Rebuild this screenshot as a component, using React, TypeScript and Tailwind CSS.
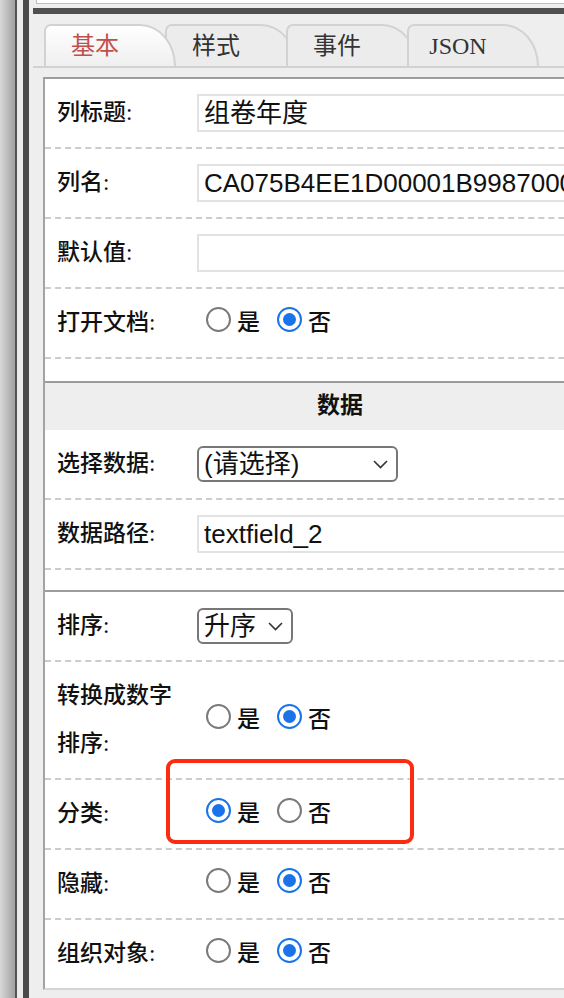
import React from "react";

const SERIF = "font-['Liberation_Serif','Noto_Sans_CJK_SC',serif]";
const SANS = "font-['Liberation_Sans','Noto_Sans_CJK_SC',sans-serif]";

const Radio = ({ checked }: { checked?: boolean }) =>
  checked ? (
    <span className="flex h-[25px] w-[25px] shrink-0 items-center justify-center rounded-full border-[2.5px] border-[#1a73e8] bg-white">
      <span className="block h-[13px] w-[13px] rounded-full bg-[#1a73e8]" />
    </span>
  ) : (
    <span className="block h-[25px] w-[25px] shrink-0 rounded-full border-2 border-[#7a7a7a] bg-white" />
  );

const YesNo = ({ yes }: { yes?: boolean }) => (
  <div className={`flex items-center text-[23px] font-medium ${SERIF}`}>
    <span className="mb-[8px] ml-[9px] block">
      <Radio checked={yes} />
    </span>
    <span className="ml-[6px]">是</span>
    <span className="mb-[8px] ml-[17px] block">
      <Radio checked={!yes} />
    </span>
    <span className="ml-[6px]">否</span>
  </div>
);

const Chevron = () => (
  <svg width="15" height="9" viewBox="0 0 15 9" fill="none">
    <path d="M1 1l6.5 6.5L14 1" stroke="#333" strokeWidth="1.6" />
  </svg>
);

const TextBox = ({ value }: { value?: string }) => (
  <div
    className={`h-[38px] w-full overflow-hidden whitespace-nowrap border-2 border-[#e2e2e2] pl-[5px] text-[26px] leading-[34px] ${SANS}`}
  >
    {value}
  </div>
);

const Select = ({ value, width }: { value: string; width: string }) => (
  <div
    className={`flex h-[36px] items-center justify-between rounded-[6px] border-2 border-[#777] bg-white pl-[5px] pr-[8px] text-[26px] ${SANS} ${width}`}
  >
    <span className="leading-[32px]">{value}</span>
    <Chevron />
  </div>
);

interface RowProps {
  label: string;
  last?: boolean;
  children?: React.ReactNode;
}

const Row = ({ label, last, children }: RowProps) => (
  <div
    className={`flex items-center py-[10px] ${
      last ? "" : "border-b-2 border-dashed border-[#cccccc]"
    }`}
  >
    <div
      className={`w-[152px] shrink-0 pl-[12px] pr-[18px] text-[23px] font-medium leading-[48px] ${SERIF}`}
    >
      {label}
    </div>
    <div className="flex min-w-0 flex-1 items-center pr-[10px]">{children}</div>
  </div>
);

const Tab = ({ label, active, first }: { label: string; active?: boolean; first?: boolean }) => (
  <div
    className={`h-[42px] w-[132px] shrink-0 rounded-tl-[7px] rounded-tr-[36px_42px] border-2 border-b-0 border-[#d2d2d2] ${
      active ? "relative z-10 bg-linear-to-b from-white to-[#efefef]" : "bg-[#ececec]"
    } ${first ? "" : "-ml-[11px]"}`}
  >
    <div
      className={`w-[98px] text-center text-[24px] leading-[40px] ${SERIF} ${
        active ? "text-[#c0504d]" : "text-[#333]"
      }`}
    >
      {label}
    </div>
  </div>
);

export default function App() {
  return (
    <div className="relative flex h-[998px] w-[564px] overflow-hidden bg-[#eeeeee] text-[#111]">
      {/* left frame strips */}
      <div className="w-[15px] shrink-0 bg-linear-to-r from-[#d8d8d8] to-[#a2a2a2]" />
      <div className="w-[2px] shrink-0 bg-[#555]" />
      <div className="w-[6px] shrink-0 bg-[#ececec]" />
      <div className="w-[6px] shrink-0 bg-[#4a4a4a]" />

      <div className="min-w-0 flex-1">
        <div className="ml-[7px] h-[4px] border-b border-l border-[#bdbdbd] bg-white" />
        <div className="ml-[4px] mt-[4px] h-[6px] bg-[#505050]" />

        {/* tabs */}
        <div className="ml-[4px] flex w-[620px] border-b-2 border-[#d2d2d2] pl-[11px] pt-[10px]">
          <Tab label="基本" active first />
          <Tab label="样式" />
          <Tab label="事件" />
          <Tab label="JSON" />
        </div>

        {/* panel */}
        <div className="ml-[14px] mt-[9px] w-[592px] border-b-2 border-l-2 border-t-2 border-b-[#d4d4d4] border-l-[#a3a3a3] border-t-[#9c9c9c] bg-white">
          <Row label="列标题:">
            <TextBox value="组卷年度" />
          </Row>
          <Row label="列名:">
            <TextBox value="CA075B4EE1D00001B9987000C3B01F2A" />
          </Row>
          <Row label="默认值:">
            <TextBox />
          </Row>
          <Row label="打开文档:">
            <YesNo />
          </Row>
          <div className="h-[22px]" />

          <div
            className={`flex h-[49px] items-center justify-center border-t-2 border-[#9c9c9c] bg-[#eeeeee] text-[23px] font-bold ${SERIF}`}
          >
            数据
          </div>
          <Row label="选择数据:">
            <Select value="(请选择)" width="w-[201px]" />
          </Row>
          <Row label="数据路径:">
            <TextBox value="textfield_2" />
          </Row>
          <div className="h-[20px]" />

          <div className="border-t-2 border-[#9c9c9c]">
            <Row label="排序:">
              <Select value="升序" width="w-[96px]" />
            </Row>
            <Row label="转换成数字排序:">
              <YesNo />
            </Row>
            <Row label="分类:">
              <YesNo yes />
            </Row>
            <Row label="隐藏:">
              <YesNo />
            </Row>
            <Row label="组织对象:" last>
              <YesNo />
            </Row>
          </div>
        </div>
      </div>

      {/* red annotation */}
      <div className="pointer-events-none absolute left-[166px] top-[759px] h-[85px] w-[248px] rounded-[9px] border-4 border-[#fb2c12]" />
    </div>
  );
}
